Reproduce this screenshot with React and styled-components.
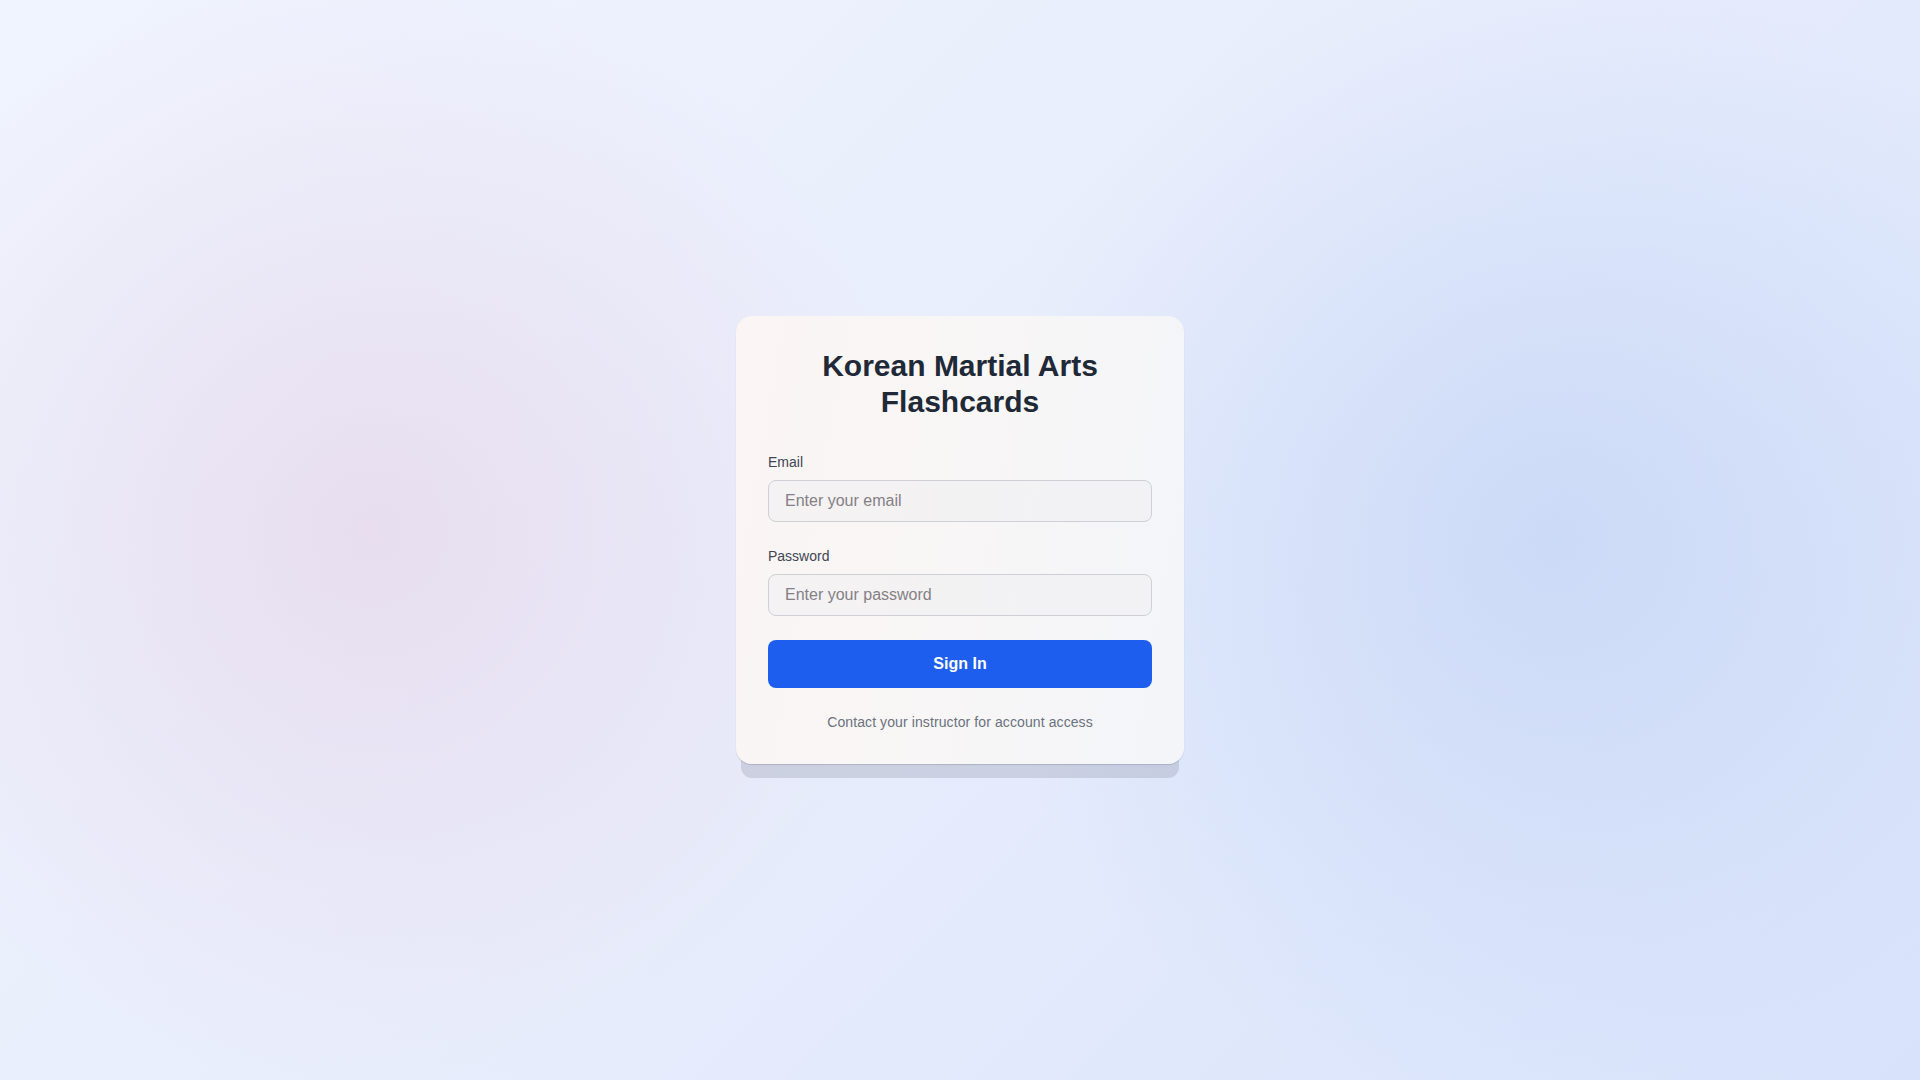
import React from 'react';
import styled, { createGlobalStyle } from 'styled-components';

const GlobalStyle = createGlobalStyle`
    * {
        box-sizing: border-box;
    }
    html, body {
        margin: 0;
        padding: 0;
    }
    body {
        font-family: "Liberation Sans", Arial, Helvetica, sans-serif;
        -webkit-font-smoothing: antialiased;
    }
`;

function App() {
    return (
        <Page>
            <GlobalStyle />
            <Card>
                <Title>Korean Martial Arts Flashcards</Title>
                <Form onSubmit={(e) => e.preventDefault()}>
                    <Field>
                        <Label htmlFor="email">Email</Label>
                        <Input id="email" type="email" placeholder="Enter your email" />
                    </Field>
                    <Field>
                        <Label htmlFor="password">Password</Label>
                        <Input id="password" type="password" placeholder="Enter your password" />
                    </Field>
                    <SubmitButton type="submit">Sign In</SubmitButton>
                </Form>
                <FooterNote>Contact your instructor for account access</FooterNote>
            </Card>
        </Page>
    );
}

/* ----------------- Styles ----------------- */
const Page = styled.div`
    min-height: 100vh;
    display: flex;
    align-items: center;
    justify-content: center;
    background:
        radial-gradient(circle 560px at 370px 530px, rgba(228, 204, 226, 0.5), rgba(228, 204, 226, 0) 100%),
        radial-gradient(circle 580px at 1555px 540px, rgba(192, 210, 245, 0.65), rgba(192, 210, 245, 0) 100%),
        linear-gradient(135deg, #f0f4fe 0%, #e9eefc 45%, #d8e3fb 100%);
`;

const Card = styled.div`
    width: 448px;
    padding: 32px;
    border-radius: 16px;
    background: linear-gradient(100deg, #fbf5f4 0%, #f8f6f6 50%, #f3f5f9 100%);
    box-shadow:
        0 1px 1px rgba(60, 60, 80, 0.2),
        0 19px 0 -5px rgba(120, 125, 145, 0.24);
`;

const Title = styled.h1`
    margin: 0 0 32px;
    font-size: 30px;
    line-height: 36px;
    font-weight: 700;
    color: #1f2937;
    text-align: center;
`;

const Form = styled.form`
    display: flex;
    flex-direction: column;
    gap: 24px;
`;

const Field = styled.div`
    display: flex;
    flex-direction: column;
`;

const Label = styled.label`
    margin-bottom: 8px;
    font-size: 14px;
    line-height: 20px;
    color: #3f4553;
`;

const Input = styled.input`
    height: 42px;
    padding: 8px 16px;
    font-family: inherit;
    font-size: 16px;
    line-height: 24px;
    color: #111827;
    background: rgba(240, 240, 242, 0.6);
    border: 1px solid #cfd0d5;
    border-radius: 8px;
    outline: none;

    &::placeholder {
        color: #857f86;
    }
`;

const SubmitButton = styled.button`
    height: 48px;
    border: none;
    border-radius: 8px;
    background: #1e5eef;
    color: #ffffff;
    font-family: inherit;
    font-size: 16px;
    font-weight: 700;
    cursor: pointer;
`;

const FooterNote = styled.p`
    margin: 24px 0 0;
    font-size: 14px;
    line-height: 20px;
    letter-spacing: 0.1px;
    color: #6b7280;
    text-align: center;
`;

export default App;
